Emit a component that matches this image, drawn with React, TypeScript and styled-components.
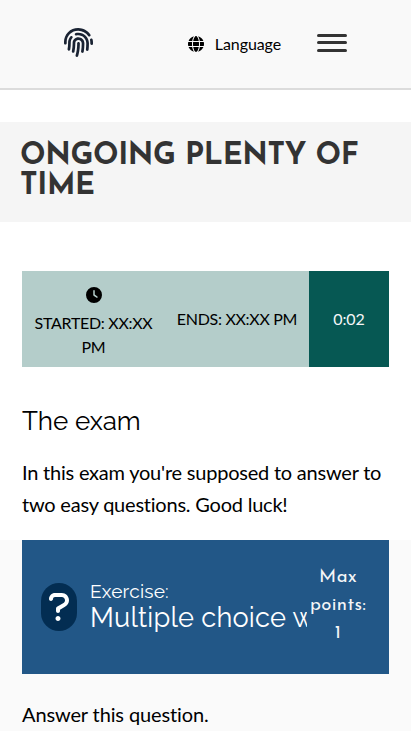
import React from "react";
import styled, { createGlobalStyle } from "styled-components";
import { FaFingerprint } from "react-icons/fa";
import { FaGlobe, FaClock } from "react-icons/fa6";

const GlobalStyle = createGlobalStyle`
  *, *::before, *::after { box-sizing: border-box; }
  html, body { height: 100%; overflow: hidden; }
  body { margin: 0; background: #fff; color: #000; font-family: Lato, sans-serif; }
  h1, h2, p { margin: 0; }
  svg { display: block; flex: none; }
`;

const Page = styled.div`
  width: 100%;
  height: 731px;
  overflow: hidden;
`;

const NavBar = styled.header`
  display: flex;
  align-items: center;
  height: 90px;
  padding: 0 64px 2px 64px;
  background: #f9f9f9;
  border-bottom: 2px solid #dcdcdc;
`;

const Logo = styled.a`
  color: #1a2333;
  width: 29px;
  padding-bottom: 1px;
`;

const LanguageButton = styled.button`
  display: flex;
  align-items: center;
  gap: 11px;
  margin-left: auto;
  margin-right: 36px;
  padding: 2px 0 0;
  border: 0;
  background: none;
  color: #000;
  font: 16px/24px Lato, sans-serif;
  letter-spacing: -0.1px;
`;

const MenuButton = styled.button`
  display: flex;
  flex-direction: column;
  width: 30px;
  height: 18px;
  padding: 0;
  border: 0;
  background: none;
`;

const MenuLine = styled.span`
  height: 3px;
  border-radius: 2px;
  background: #333;

  & + & { margin-top: 4px; }
  & + & + & { margin-top: 5px; }
`;

const Banner = styled.section`
  height: 100px;
  margin-top: 32px;
  padding: 20px 20px;
  background: #f5f5f5;
`;

const Title = styled.h1`
  color: #333;
  font: 700 30px/30px "Josefin Sans", Lato, sans-serif;
  letter-spacing: -0.35px;
  text-transform: uppercase;
`;

const Timer = styled.section`
  display: flex;
  height: 96px;
  margin: 49px 22px 0;
  background: #b4cdca;
  font-size: 16px;
  line-height: 24px;
  letter-spacing: -0.3px;
  text-transform: uppercase;
`;

const Started = styled.div`
  display: flex;
  flex-direction: column;
  align-items: center;
  width: 143px;
  padding: 16px 8px 0;
  text-align: center;

  svg { margin-bottom: 8px; }
`;

const Ends = styled.div`
  display: flex;
  align-items: center;
  justify-content: center;
  width: 144px;
  white-space: nowrap;
`;

const Countdown = styled.div`
  display: flex;
  align-items: center;
  justify-content: center;
  width: 80px;
  background: #065853;
  color: #f5f6f7;
  letter-spacing: -0.1px;
`;

const Intro = styled.section`
  height: 173px;
  padding: 36px 22px 0;
`;

const IntroHeading = styled.h2`
  font: 400 26px/36px Raleway, Lato, sans-serif;
`;

const Paragraph = styled.p`
  font-size: 20px;
  line-height: 32px;
  letter-spacing: -0.22px;
`;

const IntroText = styled(Paragraph)`
  margin-top: 17px;
`;

const ExerciseArea = styled.section`
  height: 191px;
  padding: 0 22px;
  background: #fafafa;
`;

const ExerciseHeader = styled.div`
  display: flex;
  align-items: center;
  height: 134px;
  padding: 0 19px;
  background: #225787;
  color: #fff;
`;

const QuestionBadge = styled.div`
  display: flex;
  align-items: center;
  justify-content: center;
  width: 36px;
  height: 48px;
  margin-right: 13px;
  border-radius: 20px;
  background: #032d52;
  flex: none;
`;

const ExerciseTitle = styled.h2`
  width: 217px;
  margin-top: -2px;
  overflow: hidden;
  white-space: nowrap;
  font: 400 27.2px/30px Raleway, Lato, sans-serif;
  letter-spacing: 0.2px;
`;

const ExerciseKind = styled.span`
  display: block;
  font-size: 19.1px;
  line-height: 22px;
`;

const Points = styled.div`
  width: 62px;
  margin-top: -3px;
  text-align: center;
  color: #f5f6f7;
  font: 400 18.5px/28px "Josefin Sans", Lato, sans-serif;
  letter-spacing: 0.4px;
`;

const AnswerText = styled(Paragraph)`
  margin-top: 24px;
  letter-spacing: -0.12px;
`;

function QuestionIcon() {
  return (
    <svg width="20" height="32" viewBox="0 0 320 512" fill="currentColor" aria-hidden="true">
      <path d="M204.3 32.01H96c-52.94 0-96 43.06-96 96c0 17.67 14.31 31.1 32 31.1s32-14.32 32-31.1c0-17.64 14.34-32 32-32h108.3C232.8 96.01 256 119.2 256 147.8c0 19.72-10.97 37.47-30.5 47.33L127.8 252.4C117.1 258.2 112 268.7 112 280v40c0 17.67 14.31 31.99 32 31.99s32-14.32 32-31.99V298.3L256 251.3c39.47-19.75 64-59.42 64-103.5C320 83.95 268.1 32.01 204.3 32.01zM144 400c-22.09 0-40 17.91-40 40s17.91 40 40 40s40-17.9 40-40S166.1 400 144 400z" />
    </svg>
  );
}

export default function App() {
  return (
    <Page>
      <GlobalStyle />
      <NavBar>
        <Logo aria-label="Home"><FaFingerprint size={29} /></Logo>
        <LanguageButton>
          <FaGlobe size={16} />
          Language
        </LanguageButton>
        <MenuButton aria-label="Menu">
          <MenuLine />
          <MenuLine />
          <MenuLine />
        </MenuButton>
      </NavBar>
      <main>
        <Banner>
          <Title>Ongoing plenty of time</Title>
        </Banner>
        <Timer>
          <Started>
            <FaClock size={16} />
            Started: XX:XX PM
          </Started>
          <Ends>Ends: XX:XX PM</Ends>
          <Countdown>0:02</Countdown>
        </Timer>
        <Intro>
          <IntroHeading>The exam</IntroHeading>
          <IntroText>In this exam you're supposed to answer to two easy questions. Good luck!</IntroText>
        </Intro>
        <ExerciseArea>
          <ExerciseHeader>
            <QuestionBadge><QuestionIcon /></QuestionBadge>
            <ExerciseTitle>
              <ExerciseKind>Exercise:</ExerciseKind>
              Multiple choice w
            </ExerciseTitle>
            <Points>Max points: 1</Points>
          </ExerciseHeader>
          <AnswerText>Answer this question.</AnswerText>
        </ExerciseArea>
      </main>
    </Page>
  );
}
